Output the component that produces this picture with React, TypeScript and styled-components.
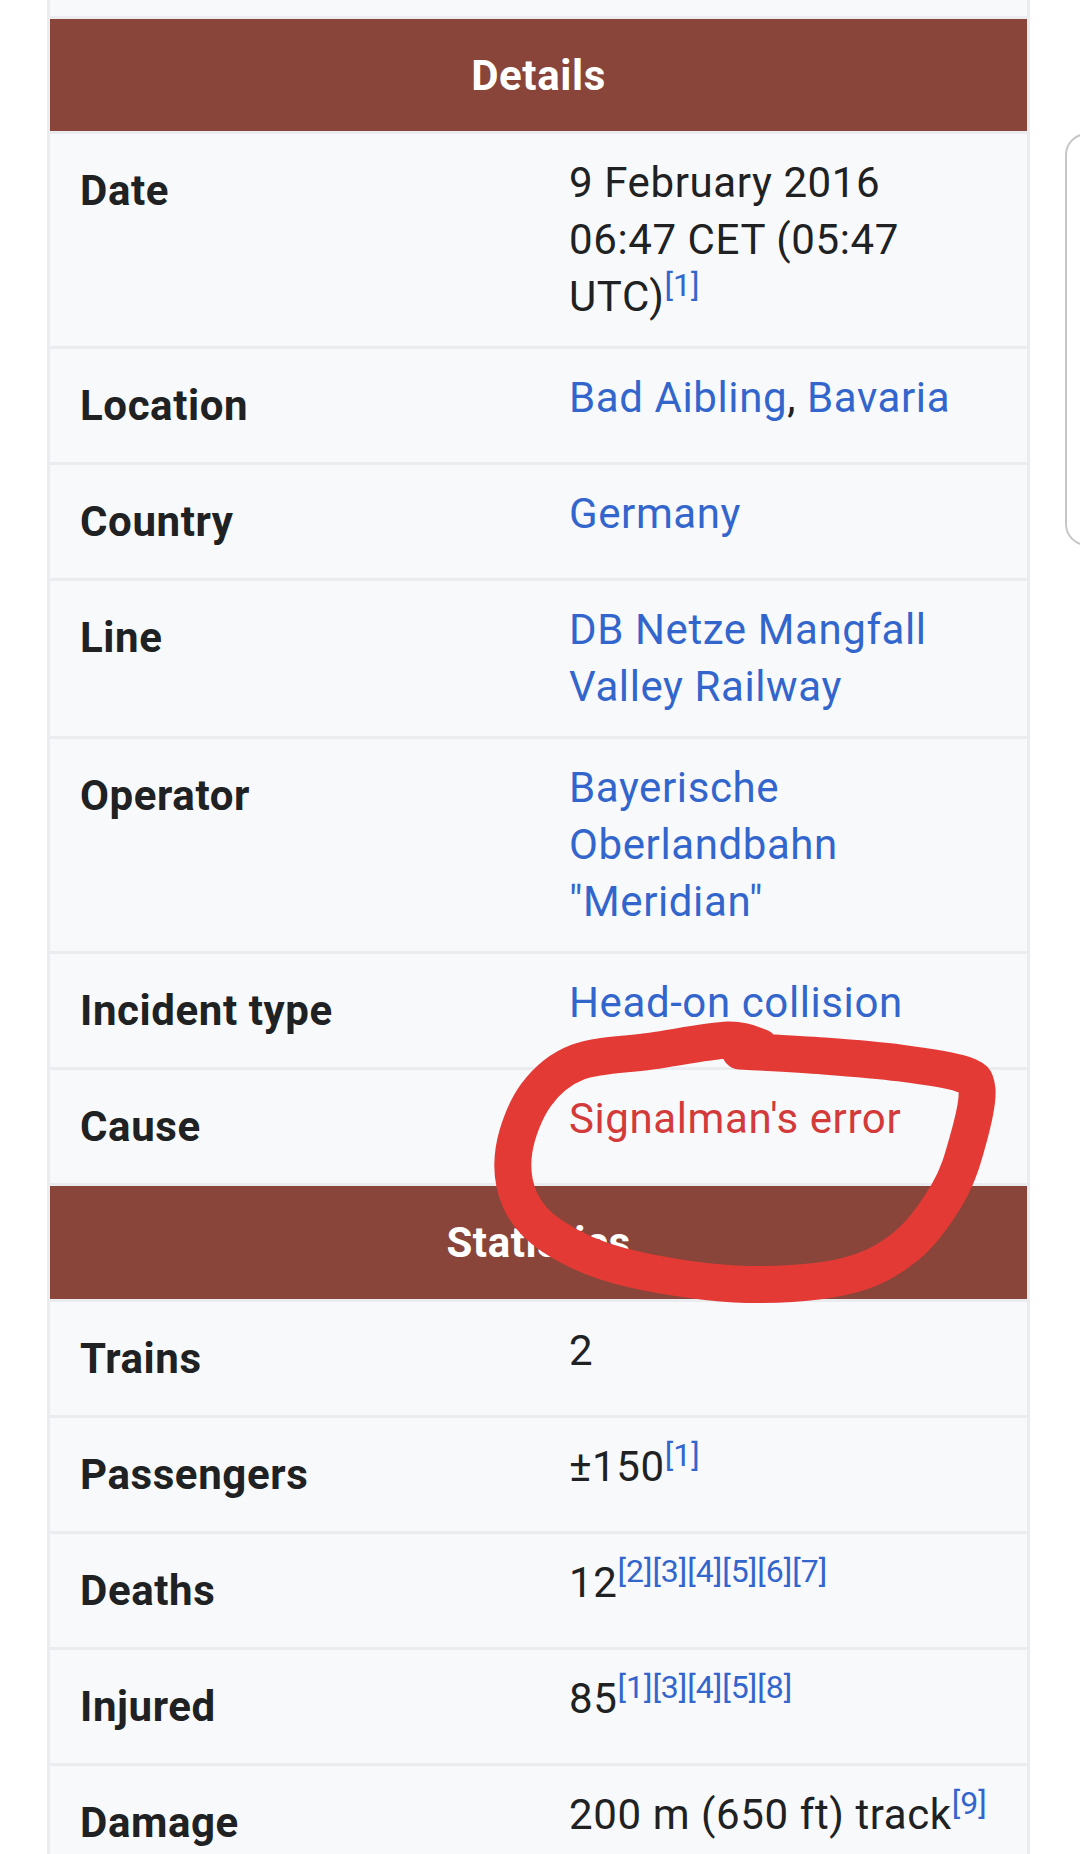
import React from "react";
import styled, { createGlobalStyle } from "styled-components";

const GlobalStyle = createGlobalStyle`
  html, body {
    margin: 0;
    padding: 0;
    background: #ffffff;
  }
  body {
    font-family: Roboto, "Noto Sans", "Liberation Sans", sans-serif;
    -webkit-font-smoothing: antialiased;
  }
`;

const Page = styled.div`
  position: relative;
  width: 1080px;
  height: 1854px;
  overflow: hidden;
  background: #ffffff;
`;

const Infobox = styled.div`
  box-sizing: border-box;
  margin-left: 47px;
  width: 983px;
  padding: 0 3px;
  background: #eaecf0;
  display: flex;
  flex-direction: column;
  gap: 3px;
`;

const Stub = styled.div`
  height: 16px;
  background: #f8f9fa;
`;

const SectionHeader = styled.div<{ $h: number }>`
  height: ${(p) => p.$h}px;
  background: #894539;
  color: #ffffff;
  font-weight: 700;
  font-size: 42px;
  letter-spacing: 0.6px;
  display: flex;
  align-items: center;
  justify-content: center;
`;

const Row = styled.div`
  display: grid;
  grid-template-columns: 519px 1fr;
  background: #f8f9fa;
  color: #202122;
`;

const Label = styled.div`
  padding: 28px 0 28px 30px;
  font-size: 42px;
  line-height: 57px;
  letter-spacing: 0.6px;
  font-weight: 700;
`;

const Value = styled.div`
  padding: 20px 30px 21px 0;
  font-size: 42px;
  line-height: 57px;
  letter-spacing: 0.6px;
  font-weight: 400;
`;

const Link = styled.span<{ $red?: boolean }>`
  color: ${(p) => (p.$red ? "#d33a3a" : "#3366cc")};
`;

const Ref = styled.sup`
  color: #3366cc;
  font-size: 32px;
  letter-spacing: 0;
  line-height: 0;
  vertical-align: super;
`;

const EdgeHandle = styled.div`
  position: absolute;
  left: 1065px;
  top: 133px;
  width: 60px;
  height: 413px;
  border: 2px solid #c6c6c6;
  border-radius: 22px;
  box-sizing: border-box;
`;

const Scribble = styled.svg`
  position: absolute;
  left: 0;
  top: 0;
  pointer-events: none;
`;

type Pt = [number, number];

const loop: Pt[] = [
  [760, 1047],
  [728, 1040],
  [652, 1051],
  [578, 1062],
  [536, 1095],
  [514, 1150],
  [520, 1200],
  [552, 1236],
  [620, 1266],
  [735, 1284],
  [842, 1277],
  [905, 1247],
  [948, 1193],
  [968, 1140],
  [977, 1090],
  [962, 1074],
  [900, 1063],
  [824, 1056],
  [740, 1051],
];

function smooth(pts: Pt[]): string {
  let d = `M ${pts[0][0]} ${pts[0][1]}`;
  for (let i = 0; i < pts.length - 1; i++) {
    const p0 = pts[i - 1] || pts[i];
    const p1 = pts[i];
    const p2 = pts[i + 1];
    const p3 = pts[i + 2] || p2;
    const c1x = p1[0] + (p2[0] - p0[0]) / 6;
    const c1y = p1[1] + (p2[1] - p0[1]) / 6;
    const c2x = p2[0] - (p3[0] - p1[0]) / 6;
    const c2y = p2[1] - (p3[1] - p1[1]) / 6;
    d += ` C ${c1x.toFixed(1)} ${c1y.toFixed(1)} ${c2x.toFixed(1)} ${c2y.toFixed(1)} ${p2[0]} ${p2[1]}`;
  }
  return d;
}

const refs = (list: number[]) => (
  <Ref>
    {list.map((n) => `[${n}]`).join("")}
  </Ref>
);

export default function App() {
  return (
    <>
      <GlobalStyle />
      <Page>
        <Infobox>
          <Stub />
          <SectionHeader $h={112}>Details</SectionHeader>
          <Row>
            <Label>Date</Label>
            <Value>
              9 February 2016
              <br />
              06:47 CET (05:47 UTC){refs([1])}
            </Value>
          </Row>
          <Row>
            <Label>Location</Label>
            <Value>
              <Link>Bad Aibling</Link>, <Link>Bavaria</Link>
            </Value>
          </Row>
          <Row>
            <Label>Country</Label>
            <Value>
              <Link>Germany</Link>
            </Value>
          </Row>
          <Row>
            <Label>Line</Label>
            <Value>
              <Link>DB Netze Mangfall Valley Railway</Link>
            </Value>
          </Row>
          <Row>
            <Label>Operator</Label>
            <Value>
              <Link>Bayerische Oberlandbahn "Meridian"</Link>
            </Value>
          </Row>
          <Row>
            <Label>Incident type</Label>
            <Value>
              <Link>Head-on collision</Link>
            </Value>
          </Row>
          <Row>
            <Label>Cause</Label>
            <Value>
              <Link $red>Signalman's error</Link>
            </Value>
          </Row>
          <SectionHeader $h={113}>Statistics</SectionHeader>
          <Row>
            <Label>Trains</Label>
            <Value>2</Value>
          </Row>
          <Row>
            <Label>Passengers</Label>
            <Value>±150{refs([1])}</Value>
          </Row>
          <Row>
            <Label>Deaths</Label>
            <Value>12{refs([2, 3, 4, 5, 6, 7])}</Value>
          </Row>
          <Row>
            <Label>Injured</Label>
            <Value>85{refs([1, 3, 4, 5, 8])}</Value>
          </Row>
          <Row>
            <Label>Damage</Label>
            <Value>200 m (650 ft) track{refs([9])}</Value>
          </Row>
        </Infobox>
        <EdgeHandle />
        <Scribble width={1080} height={1854} viewBox="0 0 1080 1854">
          <path
            d={smooth(loop)}
            fill="none"
            stroke="#e43a36"
            strokeWidth={37}
            strokeLinecap="round"
            strokeLinejoin="round"
          />
        </Scribble>
      </Page>
    </>
  );
}
